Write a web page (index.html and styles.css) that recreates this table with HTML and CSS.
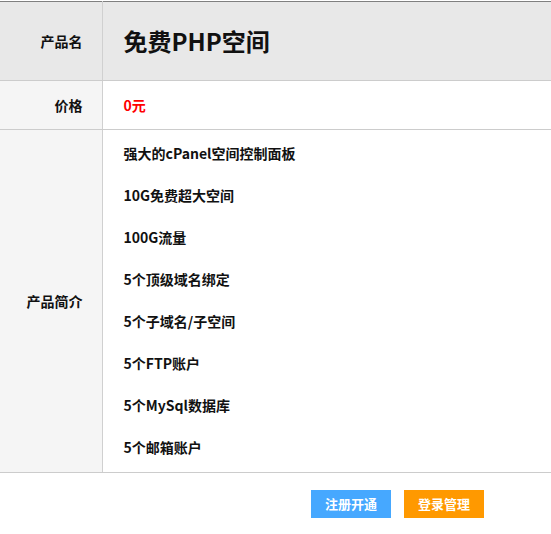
FILE: index.html
```html
<!DOCTYPE html>
<html lang="zh-CN">
<head>
<meta charset="utf-8">
<title>免费PHP空间</title>
<link rel="stylesheet" href="styles.css">
</head>
<body>
<table class="product">
  <tr class="row-head">
    <th class="label">产品名</th>
    <td class="value"><h1 class="title">免费PHP空间</h1></td>
  </tr>
  <tr class="row-price">
    <th class="label">价格</th>
    <td class="value"><span class="price">0元</span></td>
  </tr>
  <tr class="row-intro">
    <th class="label">产品简介</th>
    <td class="value">
      <ul class="features">
        <li>强大的cPanel空间控制面板</li>
        <li>10G免费超大空间</li>
        <li>100G流量</li>
        <li>5个顶级域名绑定</li>
        <li>5个子域名/子空间</li>
        <li>5个FTP账户</li>
        <li>5个MySql数据库</li>
        <li>5个邮箱账户</li>
      </ul>
    </td>
  </tr>
</table>
<div class="actions">
  <a class="btn btn-blue" href="#">注册开通</a>
  <a class="btn btn-orange" href="#">登录管理</a>
</div>
</body>
</html>
```
FILE: styles.css
```css
* { box-sizing: border-box; }
html, body { margin: 0; padding: 0; background: #fff; }
body {
  font-family: "Noto Sans CJK SC", "Noto Sans", sans-serif;
  color: #111;
  padding-top: 1px;
}
.product {
  width: 100%;
  border-collapse: collapse;
  border-top: 1px solid #808080;
}
.product th, .product td {
  padding: 0;
  border-bottom: 1px solid #cccccc;
  vertical-align: middle;
}
.label {
  width: 102px;
  text-align: right;
  padding-right: 19px !important;
  font-size: 14px;
  font-weight: bold;
  background: #f5f5f5;
  border-right: 1px solid #d0d0d0;
}
.value { padding-left: 21px !important; text-align: left; }
.row-head th, .row-head td { background: #e8e8e8; height: 79px; }
.title {
  margin: 0;
  font-size: 24px;
  font-weight: bold;
  line-height: 32px;
}
.row-price th, .row-price td { height: 49px; }
.row-price td { padding-bottom: 2px !important; }
.price { color: #ff0000; font-size: 14px; font-weight: bold; }
.row-intro td { padding-top: 2px !important; padding-bottom: 4px !important; }
.features { list-style: none; margin: 0; padding: 0; }
.features li {
  height: 42px;
  line-height: 42px;
  font-size: 14px;
  font-weight: bold;
}
.actions {
  display: flex;
  justify-content: flex-end;
  gap: 13px;
  padding: 17px 67px 0 0;
}
.btn {
  display: block;
  width: 80px;
  height: 28px;
  line-height: 28px;
  text-align: center;
  color: #fff;
  font-size: 13px;
  font-weight: bold;
  text-decoration: none;
}
.btn-blue { background: #46a8ff; }
.btn-orange { background: #ff9900; }
```
